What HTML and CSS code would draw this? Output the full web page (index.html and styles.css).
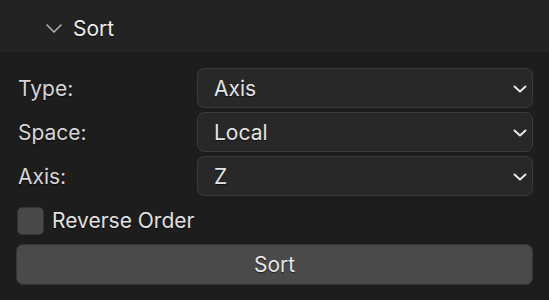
FILE: index.html
```html
<!DOCTYPE html>
<html>
<head>
<meta charset="utf-8">
<link rel="stylesheet" href="styles.css">
</head>
<body>
<div class="panel">
  <div class="panel-header">
    <svg class="caret" width="16" height="9" viewBox="0 0 16 9"><path d="M1 1 L8 8 L15 1" fill="none" stroke="#b4b4b4" stroke-width="1.5" stroke-linecap="round" stroke-linejoin="round"/></svg>
    <span class="header-title">Sort</span>
  </div>
  <div class="panel-body">
    <div class="prop-row">
      <span class="prop-label">Type:</span>
      <div class="dropdown"><span>Axis</span><svg class="dd-caret" width="14" height="8" viewBox="0 0 14 8"><path d="M1.5 1.5 L7 6.5 L12.5 1.5" fill="none" stroke="#e6e6e6" stroke-width="2" stroke-linecap="round" stroke-linejoin="round"/></svg></div>
    </div>
    <div class="prop-row">
      <span class="prop-label">Space:</span>
      <div class="dropdown"><span>Local</span><svg class="dd-caret" width="14" height="8" viewBox="0 0 14 8"><path d="M1.5 1.5 L7 6.5 L12.5 1.5" fill="none" stroke="#e6e6e6" stroke-width="2" stroke-linecap="round" stroke-linejoin="round"/></svg></div>
    </div>
    <div class="prop-row">
      <span class="prop-label">Axis:</span>
      <div class="dropdown"><span>Z</span><svg class="dd-caret" width="14" height="8" viewBox="0 0 14 8"><path d="M1.5 1.5 L7 6.5 L12.5 1.5" fill="none" stroke="#e6e6e6" stroke-width="2" stroke-linecap="round" stroke-linejoin="round"/></svg></div>
    </div>
    <label class="check-row">
      <span class="checkbox"></span>
      <span class="check-label">Reverse Order</span>
    </label>
    <div class="button">Sort</div>
  </div>
</div>
</body>
</html>
```
FILE: styles.css
```css
html, body {
  margin: 0;
  padding: 0;
  background: #1d1d1d;
  width: 549px;
  height: 300px;
  overflow: hidden;
}
body {
  font-family: "Inter", "DejaVu Sans", sans-serif;
  font-size: 21px;
  color: #e4e4e4;
}
.panel {
  display: flex;
  flex-direction: column;
}
.panel-header {
  height: 52px;
  background: #232323;
  display: flex;
  align-items: center;
  padding-left: 46px;
  box-sizing: border-box;
  padding-top: 4px;
}
.caret {
  margin-right: 11px;
  margin-top: 0;
}
.header-title {
  font-size: 21px;
  color: #ececec;
  text-shadow: 0 1px 1px rgba(0,0,0,0.6);
}
.panel-body {
  padding: 16px 16px 0 16px;
  display: flex;
  flex-direction: column;
}
.prop-row {
  display: grid;
  grid-template-columns: 181px 1fr;
  align-items: center;
  margin-bottom: 4px;
}
.prop-label {
  padding-left: 2px;
  color: #d6d6d6;
  text-shadow: 0 1px 1px rgba(0,0,0,0.6);
}
.dropdown {
  height: 40px;
  box-sizing: border-box;
  background: #282828;
  border: 1px solid #3a3a3a;
  border-radius: 7px;
  display: flex;
  align-items: center;
  justify-content: space-between;
  padding: 0 5px 0 16px;
  text-shadow: 0 1px 1px rgba(0,0,0,0.6);
}
.dd-caret {
  margin-top: 2px;
}
.check-row {
  display: flex;
  align-items: center;
  margin-top: 6px;
  height: 29px;
}
.checkbox {
  width: 27px;
  height: 28px;
  box-sizing: border-box;
  background: #494949;
  border: 1px solid #353535;
  border-radius: 5px;
  margin-left: 1px;
  margin-right: 8px;
}
.check-label {
  color: #e0e0e0;
  text-shadow: 0 1px 1px rgba(0,0,0,0.6);
}
.button {
  margin-top: 9px;
  height: 41px;
  box-sizing: border-box;
  background: #4a4a4a;
  border: 1px solid #363636;
  border-radius: 7px;
  display: flex;
  align-items: center;
  justify-content: center;
  color: #e6e6e6;
  text-shadow: 0 1px 1px rgba(0,0,0,0.6);
}
```
